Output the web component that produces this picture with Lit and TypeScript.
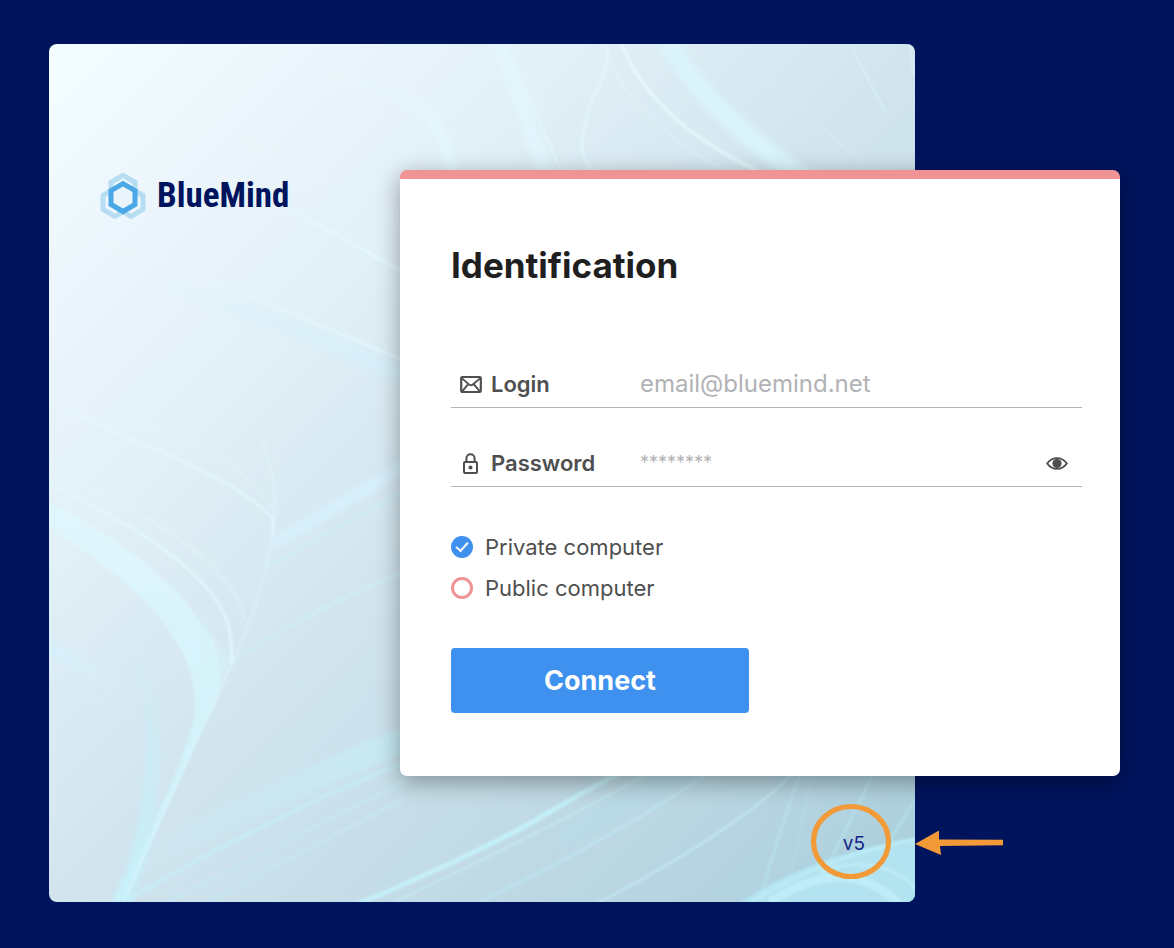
import { LitElement, css, html, svg } from "lit";
import { customElement, state } from "lit/decorators.js";

const sansStack = css`Inter, "Noto Sans", sans-serif`;

/** Logo mark: three pale hexagons behind a bright one. */
@customElement("brand-logo")
class BrandLogo extends LitElement {
  static styles = css`
    :host {
      display: flex;
      align-items: center;
      gap: 11px;
      color: #00145e;
      font: 700 35px/48px "Liberation Sans Narrow", "Roboto Condensed", Roboto, sans-serif;
    }
    .mark {
      width: 46px;
      height: 48px;
      flex: none;
    }
  `;

  render() {
    const hex = "M0-13.9 12-6.9V6.9L0 13.9-12 6.9V-6.9Z";
    return html`
      <svg class="mark" viewBox="0 0 46 48" fill="none" stroke-width="5" aria-hidden="true">
        <g stroke="#b7ddf3">
          <path d=${hex} transform="translate(23 17.2)" />
          <path d=${hex} transform="translate(15 30.4)" />
          <path d=${hex} transform="translate(31 30.4)" />
        </g>
        <path d=${hex} transform="translate(23 25.6)" fill="#eaf5fb" stroke="#4aa8e6" />
      </svg>
      <span>BlueMind</span>
    `;
  }
}

/** Decorative backdrop with soft feather-like strands of light. */
@customElement("feather-backdrop")
class FeatherBackdrop extends LitElement {
  static styles = css`
    :host,
    .art {
      display: block;
      width: 100%;
      height: 100%;
    }
  `;

  private strand(d: string, width: number, color: string, opacity: number) {
    return svg`<path d=${d} stroke=${color} stroke-width=${width} stroke-opacity=${opacity} />`;
  }

  private fade(id: string, color: string, from: [number, number], to: [number, number]) {
    return svg`
      <linearGradient id=${id} gradientUnits="userSpaceOnUse" x1=${from[0]} y1=${from[1]} x2=${to[0]} y2=${to[1]}>
        <stop offset="0" stop-color=${color} stop-opacity="0" />
        <stop offset="1" stop-color=${color} />
      </linearGradient>`;
  }

  render() {
    const pale = "#e4f8ff";
    const cyan = "#c4f2fb";
    const sky = "#d6f1fd";
    return html`
      <svg class="art" viewBox="49 44 866 858" preserveAspectRatio="xMidYMid slice" aria-hidden="true">
        <defs>
          <linearGradient id="base" x1="0" y1="0" x2="1" y2="1">
            <stop offset="0" stop-color="#f4fdff" />
            <stop offset=".14" stop-color="#edf6fc" />
            <stop offset=".3" stop-color="#e2f0f7" />
            <stop offset=".5" stop-color="#d2e5ef" />
            <stop offset=".75" stop-color="#bfd9e4" />
            <stop offset="1" stop-color="#a9cedc" />
          </linearGradient>
          <linearGradient id="leaf" x1="0" y1="0" x2="0" y2="1">
            <stop offset="0" stop-color="#e2f7fe" stop-opacity=".9" />
            <stop offset="1" stop-color="#c8f1fa" stop-opacity=".9" />
          </linearGradient>
          ${this.fade("fadeRib", cyan, [107, 640], [140, 880])}
          ${this.fade("fadeSweep", sky, [130, 270], [400, 370])}
          ${this.fade("fadeLine", pale, [110, 160], [390, 260])}
          ${this.fade("fadeLow", cyan, [110, 880], [390, 740])}
          ${this.fade("fadeTop", pale, [320, 80], [450, 150])}
          ${this.fade("fadeLeft", sky, [125, 700], [60, 655])}
          <filter id="soft" x="-20%" y="-20%" width="140%" height="140%">
            <feGaussianBlur stdDeviation="3" />
          </filter>
          <filter id="fine" x="-20%" y="-20%" width="140%" height="140%">
            <feGaussianBlur stdDeviation="1" />
          </filter>
        </defs>
        <rect x="49" y="44" width="866" height="858" fill="url(#base)" />

        <g fill="none" filter="url(#soft)">
          ${this.strand("M40 644Q85 664 120 690", 13, "url(#fadeLeft)", 0.9)}
          ${this.strand("M273 544 420 457", 13, sky, 0.85)}
          ${this.strand("M130 870Q270 793 420 734", 26, "url(#fadeLow)", 0.55)}
          ${this.strand("M107 617Q158 660 152 767 150 840 122 902", 16, "url(#fadeRib)", 0.7)}
          ${this.strand("M130 275Q260 310 420 382", 16, "url(#fadeSweep)", 0.8)}
          ${this.strand("M320 76Q455 90 450 180", 12, "url(#fadeTop)", 0.8)}
          ${this.strand("M495 30Q520 100 550 185", 16, pale, 0.65)}
          ${this.strand("M662 30Q700 110 815 185", 19, "#daf4fc", 0.95)}
          ${this.strand("M560 840 740 740", 22, "#b1dcec", 0.4)}
        </g>
        <path d="M40 497C130 543 185 590 212 640Q224 668 219 695L207 720 123 905H110C150 835 180 770 194 720 203 650 150 590 40 522Z"
          fill="url(#leaf)" filter="url(#fine)" />
        <path d="M201 640Q220 680 207 720L237 653Q215 655 201 610Z" fill="#d6f3fb" opacity=".5" filter="url(#soft)" />
        <path d="M735 906C790 868 850 848 920 838V906Z" fill="#b4e7f4" opacity=".85" filter="url(#fine)" />

        <g fill="none" filter="url(#fine)">
          ${this.strand("M123 902 187 760 237 653Q275 565 275 500 274 465 260 437", 2, pale, 0.5)}
          ${this.strand("M40 480C140 526 215 575 229 627 234 655 230 660 232 664", 3, pale, 0.8)}
          ${this.strand("M40 466C140 510 230 555 245 620", 2, pale, 0.45)}
          ${this.strand("M40 398 140 443Q245 485 273 520V536", 3, pale, 0.7)}
          ${this.strand("M130 420Q250 460 274 512", 2, pale, 0.3)}
          ${this.strand("M107 617Q158 670 149 767 146 830 121 902", 3, "url(#fadeRib)", 0.7)}
          ${this.strand("M40 665 118 710M40 743 110 779", 3, "url(#fadeLeft)", 0.9)}
          ${this.strand("M267 567 402 492M237 658Q320 605 402 573", 3, "#cdf0f8", 0.65)}
          ${this.strand("M207 720 307 680M270 585 402 512", 2, cyan, 0.2)}
          ${this.strand("M123 902Q270 817 402 763", 5, cyan, 0.5)}
          ${this.strand("M167 902 407 780M207 902 405 798", 2, cyan, 0.45)}
          ${this.strand("M358 904Q470 857 538 819 580 793 622 772", 5, cyan, 0.9)}
          ${this.strand("M395 902Q540 833 650 773", 3, cyan, 0.4)}
          ${this.strand("M473 905Q610 840 707 774", 4, "#bdeaf5", 0.5)}
          ${this.strand("M592 906C670 866 745 820 793 774", 2, cyan, 0.65)}
          ${this.strand("M790 880 812 774", 2, cyan, 0.2)}
          ${this.strand("M760 898Q780 830 800 774M827 867 873 774M890 840 915 800", 3, "#b8ebf6", 0.45)}
          ${this.strand("M745 907C790 874 865 848 920 838", 4, "#c0f0f8", 0.6)}
          ${this.strand("M770 902Q850 850 903 908", 9, "#c3f2fa", 0.65)}
          ${this.strand("M820 872Q880 850 920 892", 3, cyan, 0.6)}
          ${this.strand("M285 207 402 271", 4, "url(#fadeLine)", 0.9)}
          ${this.strand("M107 243Q240 290 402 360", 3, "url(#fadeLine)", 0.8)}
          ${this.strand("M245 140Q330 180 402 230", 2, "url(#fadeLine)", 0.4)}
          ${this.strand("M503 44 540 122 562 174", 3, pale, 0.6)}
          ${this.strand("M607 44C612 75 590 90 585 125 580 150 580 155 594 172", 3, pale, 0.65)}
          ${this.strand("M622 44Q650 120 760 172", 3, "#e8faff", 0.8)}
          ${this.strand("M610 62Q640 125 728 172M545 44Q538 85 540 118", 2, pale, 0.4)}
          ${this.strand("M850 44 885 112M910 44 914 75", 2, "#d8f3fc", 0.7)}
          ${this.strand("M750 65 865 165", 3, "#d8effa", 0.35)}
        </g>
      </svg>
    `;
  }
}

@customElement("login-card")
class LoginCard extends LitElement {
  @state() private revealed = false;

  static styles = css`
    :host {
      display: block;
      border-top: 9px solid #f09394;
      border-radius: 7px;
      background: #fff;
      box-shadow: 0 6px 24px rgba(0, 0, 0, 0.36);
      color: #4f4f4f;
      font-family: ${sansStack};
    }
    .form {
      padding: 66px 38px 63px 51px;
    }
    .title {
      margin: 0 0 76px;
      color: #1f1f1f;
      font-size: 35px;
      line-height: 40px;
      font-weight: 700;
    }
    .field {
      display: grid;
      grid-template-columns: 189px 1fr auto;
      align-items: center;
      height: 46px;
      border-bottom: 1px solid #b4b4b6;
    }
    .field + .field {
      margin-top: 32px;
    }
    .label {
      display: flex;
      align-items: center;
      gap: 9px;
      padding-left: 9px;
      font-size: 22px;
      font-weight: 600;
    }
    .icon {
      display: block;
      width: 22px;
      height: 22px;
      flex: none;
    }
    .input {
      min-width: 0;
      padding: 0;
      border: 0;
      outline: 0;
      background: none;
      color: #4f4f4f;
      font: 400 24px/32px ${sansStack};
    }
    .input.secret {
      font-size: 18px;
    }
    .input::placeholder {
      color: #b1b2b5;
      opacity: 1;
    }
    .reveal {
      margin: 0 14px 0 0;
      padding: 0;
      border: 0;
      background: none;
      color: inherit;
      cursor: pointer;
    }
    .choices {
      display: grid;
      justify-items: start;
      gap: 15px;
      margin: 47px 0;
      padding: 0;
      border: 0;
    }
    .choice {
      display: flex;
      align-items: center;
      gap: 12px;
      font-size: 22px;
      line-height: 26px;
    }
    .radio {
      appearance: none;
      display: grid;
      place-items: center;
      width: 22px;
      height: 22px;
      margin: 0;
      border: 3px solid #f09394;
      border-radius: 50%;
    }
    .radio:checked {
      border-color: #3e91ee;
      background: #3e91ee;
    }
    .radio:checked::after {
      content: "";
      width: 12px;
      height: 7px;
      margin-bottom: 3px;
      box-sizing: border-box;
      border: solid #fff;
      border-width: 0 0 2px 2px;
      transform: rotate(-48deg);
    }
    .submit {
      display: block;
      width: 298px;
      max-width: 100%;
      height: 65px;
      padding: 0;
      border: 0;
      border-radius: 4px;
      background: #3e91ee;
      color: #fff;
      font: 700 27px/32px ${sansStack};
      cursor: pointer;
    }
  `;

  render() {
    return html`
      <form class="form" @submit=${(e: Event) => e.preventDefault()}>
        <h1 class="title">Identification</h1>
        <div class="field">
          <label class="label" for="login">
            <svg class="icon" viewBox="0 0 22 22" fill="none" stroke="currentColor" stroke-width="2.2" aria-hidden="true">
              <rect x="1.2" y="4" width="19.6" height="15" rx="1.2" />
              <path d="m2 5.4 7.2 6.2q1.8 1.5 3.6 0L20 5.4M2.2 18.4l5.6-6.8M19.8 18.4l-5.6-6.8" stroke-width="1.9" />
            </svg>
            Login
          </label>
          <input class="input" id="login" type="email" placeholder="email@bluemind.net" />
        </div>
        <div class="field">
          <label class="label" for="password">
            <svg class="icon" viewBox="0 0 22 22" fill="none" stroke="currentColor" stroke-width="2" aria-hidden="true">
              <rect x="4" y="10" width="13" height="11" rx="1" />
              <path d="M6.4 10V6.4a4.1 4.1 0 0 1 8.2 0V10" />
              <circle cx="10.5" cy="15.4" r="2" fill="currentColor" stroke="none" />
            </svg>
            Password
          </label>
          <input
            class="input secret"
            id="password"
            type=${this.revealed ? "text" : "password"}
            placeholder="********"
          />
          <button
            class="reveal"
            type="button"
            aria-label="Show password"
            aria-pressed=${this.revealed}
            @click=${() => (this.revealed = !this.revealed)}
          >
            <svg class="icon" viewBox="0 0 22 22" aria-hidden="true">
              <path d="M1.2 11.5Q5 6.1 11 6.1T20.8 11.5Q17 16.9 11 16.9T1.2 11.5Z" fill="none" stroke="currentColor" stroke-width="1.9" />
              <circle cx="11" cy="11.5" r="4.6" fill="currentColor" />
            </svg>
          </button>
        </div>
        <fieldset class="choices" aria-label="Computer type">
          <label class="choice"><input class="radio" type="radio" name="computer" value="private" checked />Private computer</label>
          <label class="choice"><input class="radio" type="radio" name="computer" value="public" />Public computer</label>
        </fieldset>
        <button class="submit" type="submit">Connect</button>
      </form>
    `;
  }
}

@customElement("app-root")
class AppRoot extends LitElement {
  static styles = css`
    :host {
      display: block;
      box-sizing: border-box;
      min-height: 100vh;
      padding: 44px 54px 46px 49px;
      background: #00145e;
    }
    .stage {
      display: grid;
      grid-template-columns: 351fr 515fr 205fr;
      grid-template-rows: 126px auto 126px;
    }
    .panel {
      grid-column: 1 / 3;
      grid-row: 1 / 4;
      contain: size;
      overflow: hidden;
      border-radius: 8px;
    }
    .brand {
      grid-column: 1;
      grid-row: 2;
      justify-self: start;
      align-self: start;
      margin: 2px 0 0 51px;
    }
    .card {
      grid-column: 2 / 4;
      grid-row: 2;
    }
    .version {
      position: relative;
      grid-column: 2;
      grid-row: 3;
      justify-self: end;
      align-self: center;
      margin: 10px 50px 0 0;
      color: #14278a;
      font: 400 19px/24px ${sansStack};
    }
    .marker {
      position: absolute;
      left: -32px;
      top: -29px;
      width: 194px;
      height: 78px;
      overflow: visible;
    }
  `;

  render() {
    return html`
      <main class="stage">
        <div class="panel"><feather-backdrop></feather-backdrop></div>
        <brand-logo class="brand"></brand-logo>
        <login-card class="card"></login-card>
        <div class="version">
          v5
          <svg class="marker" viewBox="0 0 194 78" aria-hidden="true">
            <ellipse cx="40" cy="38.5" rx="37.5" ry="35" fill="none" stroke="#f29a38" stroke-width="5.2" />
            <path d="M104 41 128 27.5V36.6L192 36.8V42.2L129 43 130 52Z" fill="#f29a38" />
          </svg>
        </div>
      </main>
    `;
  }
}
